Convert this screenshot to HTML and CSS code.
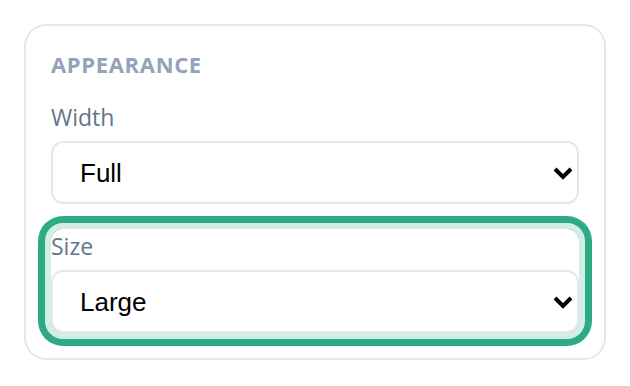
FILE: index.html
```html
<!DOCTYPE html>
<html>
<head>
    <title>Appearance</title>
    <link rel="stylesheet" href="styles.css">
</head>
<body>
    <div class="panel">
        <h3 class="panel-title">Appearance</h3>

        <div class="field">
            <label class="field-label" for="width">Width</label>
            <div class="select-wrap">
                <select id="width" class="select">
                    <option>Full</option>
                    <option>Half</option>
                </select>
                <svg class="chevron" viewBox="0 0 20 13" width="20" height="13">
                    <polyline points="2,2 10,10 18,2" fill="none" stroke="#000" stroke-width="4"/>
                </svg>
            </div>
        </div>

        <div class="field field-active">
            <label class="field-label" for="size">Size</label>
            <div class="select-wrap">
                <select id="size" class="select">
                    <option>Large</option>
                    <option>Medium</option>
                    <option>Small</option>
                </select>
                <svg class="chevron" viewBox="0 0 20 13" width="20" height="13">
                    <polyline points="2,2 10,10 18,2" fill="none" stroke="#000" stroke-width="4"/>
                </svg>
            </div>
        </div>
    </div>
</body>
</html>
```

FILE: styles.css
```css
body {
    margin: 0;
    padding: 24px;
    font-family: 'Open Sans', 'Noto Sans', sans-serif;
    background-color: #fff;
}
.panel {
    box-sizing: border-box;
    width: 582px;
    padding: 23px 25px 25px;
    border: 2px solid #e2e8f0;
    border-radius: 22px;
}
.panel-title {
    margin: 0 0 21px;
    font-size: 22px;
    line-height: 30px;
    font-weight: 700;
    letter-spacing: 0.03em;
    text-transform: uppercase;
    color: #94a3b8;
}
.field {
    border-radius: 12px;
}
.field + .field {
    margin-top: 25px;
}
.field-active {
    box-shadow: 0 0 0 6px #d4eee6, 0 0 0 13px #2eaa86;
}
.field-label {
    display: block;
    margin-bottom: 6px;
    font-size: 23px;
    line-height: 35px;
    color: #64748b;
}
.select-wrap {
    position: relative;
}
.select {
    display: block;
    box-sizing: border-box;
    width: 100%;
    height: 63px;
    padding: 0 50px 0 27px;
    border: 2px solid #e2e8f0;
    border-radius: 12px;
    background: #fff;
    font-family: 'Liberation Sans', Arial, sans-serif;
    font-size: 26px;
    color: #000;
    -webkit-appearance: none;
    appearance: none;
}
.chevron {
    position: absolute;
    right: 6px;
    top: 50%;
    margin-top: -6px;
    pointer-events: none;
}
```
